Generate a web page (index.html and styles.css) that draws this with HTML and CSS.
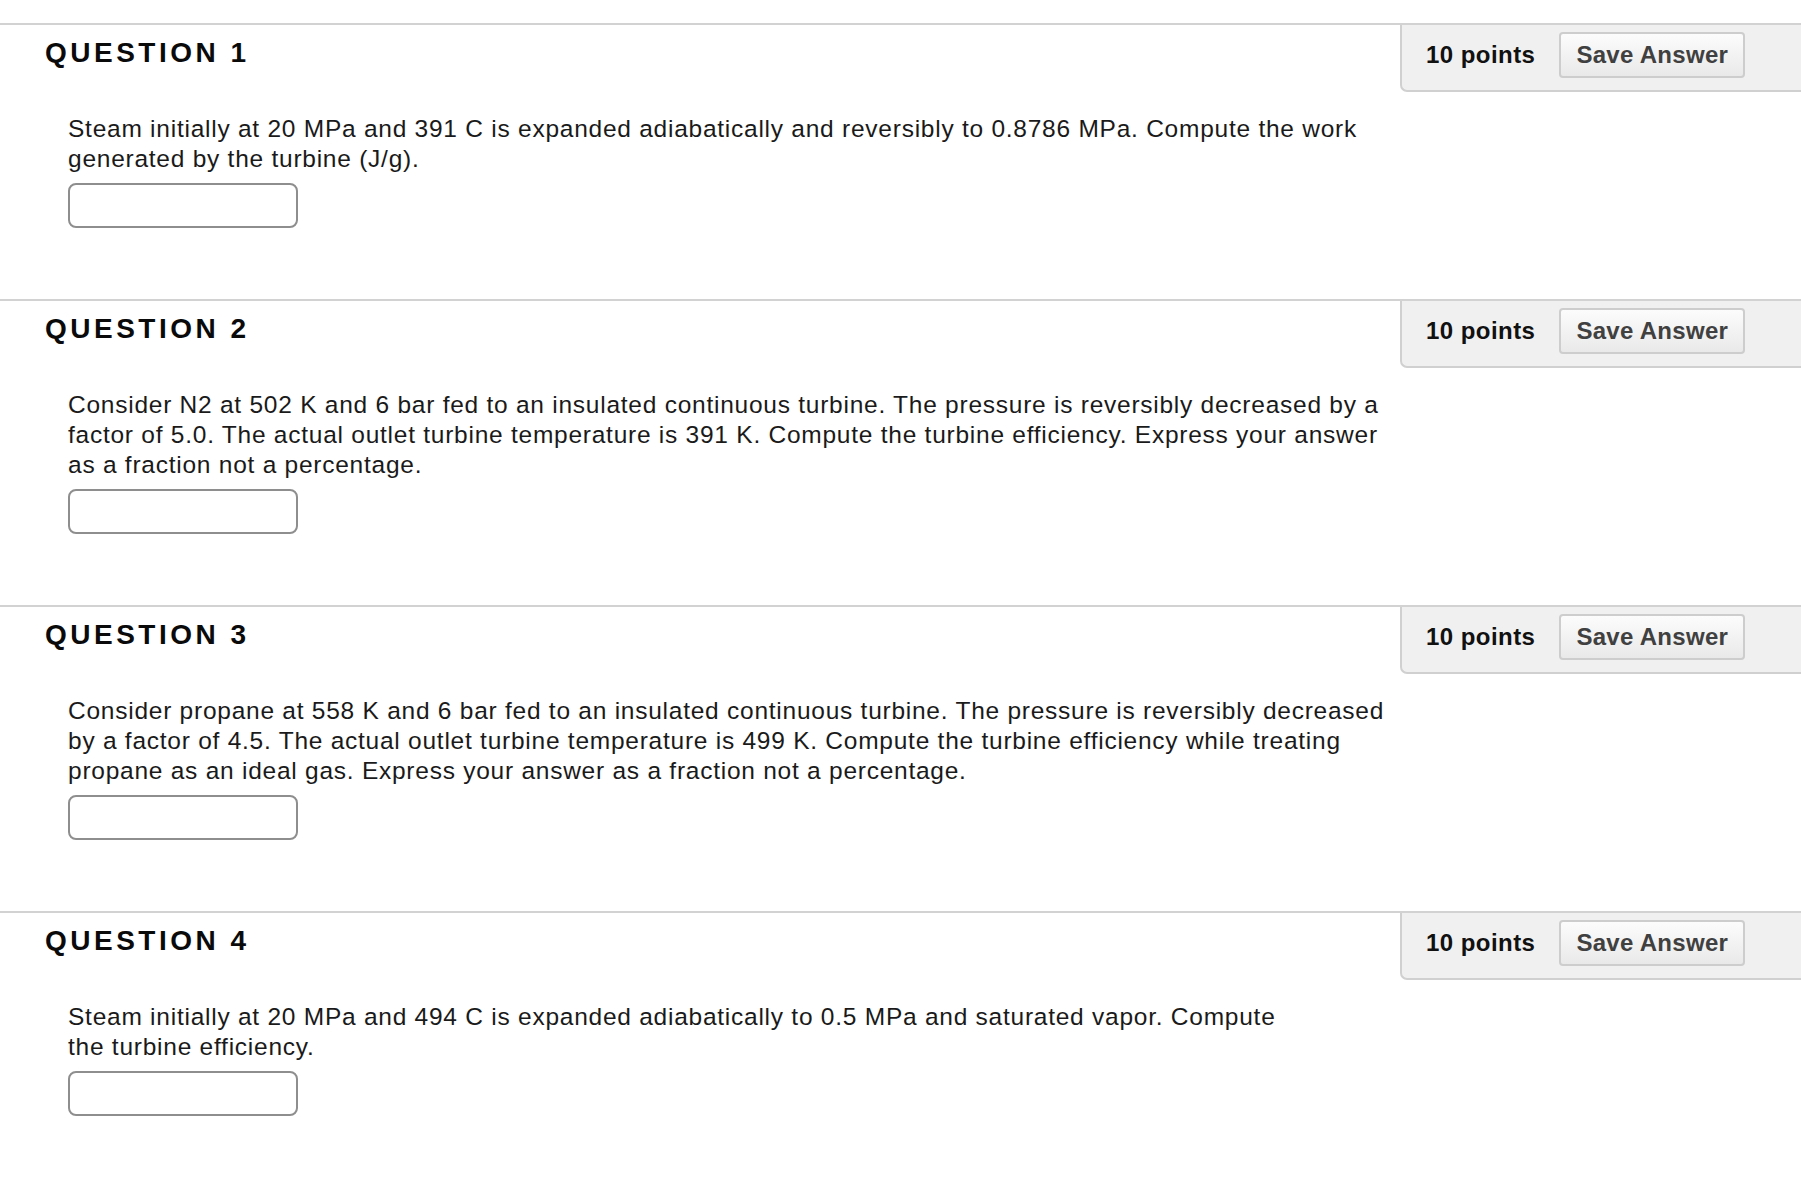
FILE: index.html
```html
<!DOCTYPE html>
<html lang="en">
<head>
<meta charset="utf-8">
<title>Questions</title>
<link rel="stylesheet" href="styles.css">
</head>
<body>
<main class="quiz">
  <section class="question">
    <div class="q-head">
      <h2 class="q-title">QUESTION 1</h2>
      <div class="q-points">
        <span class="points">10 points</span>
        <button class="save" type="button">Save Answer</button>
      </div>
    </div>
    <div class="q-body">
      <p class="q-text">Steam initially at 20 MPa and 391 C is expanded adiabatically and reversibly to 0.8786 MPa. Compute the work<br>generated by the turbine (J/g).</p>
      <input class="answer" type="text">
    </div>
  </section>

  <section class="question">
    <div class="q-head">
      <h2 class="q-title">QUESTION 2</h2>
      <div class="q-points">
        <span class="points">10 points</span>
        <button class="save" type="button">Save Answer</button>
      </div>
    </div>
    <div class="q-body">
      <p class="q-text">Consider N2 at 502 K and 6 bar fed to an insulated continuous turbine. The pressure is reversibly decreased by a<br>factor of 5.0. The actual outlet turbine temperature is 391 K. Compute the turbine efficiency. Express your answer<br>as a fraction not a percentage.</p>
      <input class="answer" type="text">
    </div>
  </section>

  <section class="question">
    <div class="q-head">
      <h2 class="q-title">QUESTION 3</h2>
      <div class="q-points">
        <span class="points">10 points</span>
        <button class="save" type="button">Save Answer</button>
      </div>
    </div>
    <div class="q-body">
      <p class="q-text">Consider propane at 558 K and 6 bar fed to an insulated continuous turbine. The pressure is reversibly decreased<br>by a factor of 4.5. The actual outlet turbine temperature is 499 K. Compute the turbine efficiency while treating<br>propane as an ideal gas. Express your answer as a fraction not a percentage.</p>
      <input class="answer" type="text">
    </div>
  </section>

  <section class="question">
    <div class="q-head">
      <h2 class="q-title">QUESTION 4</h2>
      <div class="q-points">
        <span class="points">10 points</span>
        <button class="save" type="button">Save Answer</button>
      </div>
    </div>
    <div class="q-body">
      <p class="q-text">Steam initially at 20 MPa and 494 C is expanded adiabatically to 0.5 MPa and saturated vapor. Compute<br>the turbine efficiency.</p>
      <input class="answer" type="text">
    </div>
  </section>
</main>
</body>
</html>
```

FILE: styles.css
```css
html, body {
  margin: 0;
  padding: 0;
  background: #ffffff;
}

body {
  font-family: "Liberation Sans", Arial, Helvetica, sans-serif;
  color: #1a1a1a;
  padding-top: 23px;
  overflow: hidden;
}

.quiz {
  display: flex;
  flex-direction: column;
}

.question {
  border-top: 2px solid #d2d2d2;
  padding-bottom: 71px;
}

.q-head {
  display: flex;
  justify-content: space-between;
  align-items: flex-start;
}

.q-title {
  margin: 0;
  padding: 13px 0 0 45px;
  font-size: 28px;
  line-height: 30px;
  font-weight: 700;
  letter-spacing: 3.5px;
  color: #0a0a0a;
}

.q-points {
  flex: 0 0 401px;
  box-sizing: border-box;
  display: flex;
  align-items: center;
  gap: 24px;
  padding: 7px 0 12px 24px;
  background: #f0f0f0;
  border-left: 2px solid #d0d0d0;
  border-bottom: 2px solid #d0d0d0;
  border-bottom-left-radius: 7px;
}

.points {
  font-size: 24px;
  font-weight: 700;
  letter-spacing: 0.45px;
  color: #111111;
  line-height: 30px;
}

.save {
  height: 46px;
  box-sizing: border-box;
  padding: 0 15px;
  border: 2px solid #cdcdcd;
  border-radius: 4px;
  background: linear-gradient(#fcfcfc, #e9e9e9);
  font-family: "Liberation Sans", Arial, Helvetica, sans-serif;
  font-size: 24px;
  font-weight: 700;
  letter-spacing: 0.3px;
  color: #404040;
}

.q-body {
  margin-top: 22px;
  padding-left: 68px;
}

.q-text {
  margin: 0;
  font-size: 24.5px;
  line-height: 30px;
  letter-spacing: 0.75px;
  color: #1a1a1a;
  white-space: nowrap;
}

.answer {
  display: block;
  margin: 9px 0 0 0;
  width: 230px;
  height: 45px;
  box-sizing: border-box;
  border: 2px solid #8e8e8e;
  border-radius: 8px;
  background: #ffffff;
  padding: 0 8px;
  font-size: 24px;
}
```
